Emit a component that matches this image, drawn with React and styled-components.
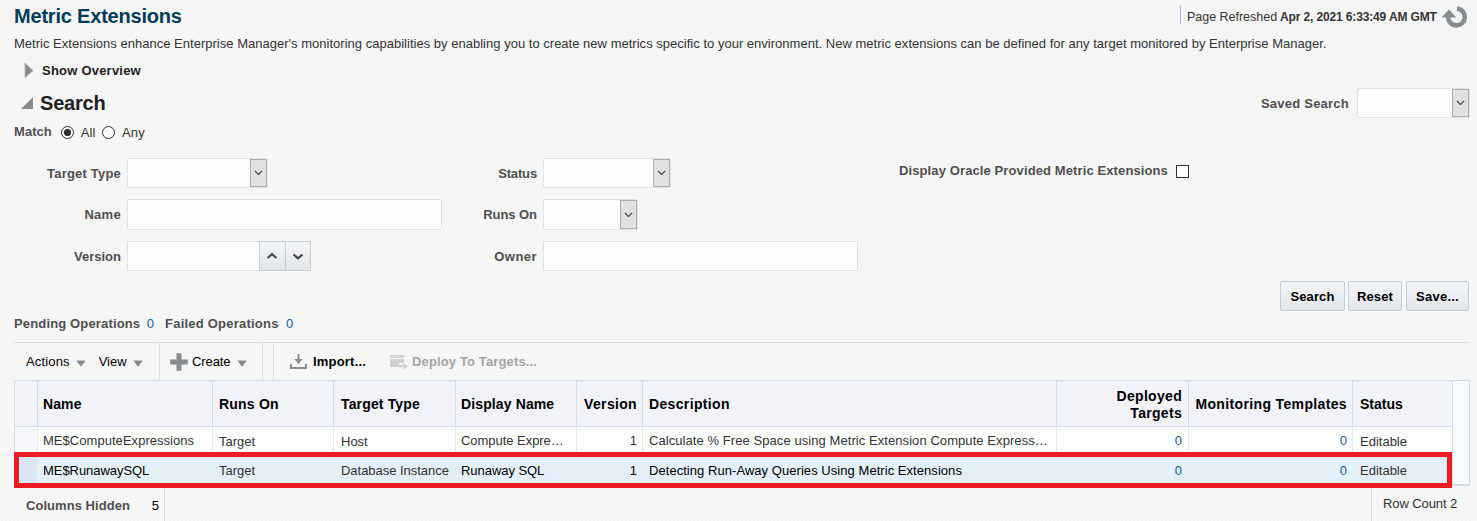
import React from 'react';
import styled, { createGlobalStyle } from 'styled-components';

const Global = createGlobalStyle`
  * { box-sizing: border-box; }
  body {
    margin: 0;
    font: 13px/15px "Liberation Sans", Arial, sans-serif;
    color: #333;
    background: repeating-linear-gradient(45deg, #f8f8f8 0 1.414px, #f4f4f4 1.414px 2.828px);
  }
`;

const Text = styled.span`
  display: block;
  white-space: nowrap;
  font-size: ${p => p.$size || 13}px;
  font-weight: ${p => (p.$bold ? 700 : 400)};
  color: ${p => p.$color || '#333'};
  letter-spacing: ${p => p.$ls || 0}px;
`;

const Page = styled.main`
  width: 1477px;
  height: 521px;
  overflow: hidden;
  padding-left: 14px;
`;

const Header = styled.header`
  display: flex;
  justify-content: space-between;
  height: 36px;
`;

const Title = styled.h1`
  margin: ${p => p.$top}px 0 0;
  font-size: 20px;
  line-height: 22px;
  font-weight: 700;
  white-space: nowrap;
  color: ${p => p.$color};
  letter-spacing: ${p => p.$ls}px;
`;

const Refreshed = styled.div`
  display: flex;
  width: 297px;
  height: 18px;
  margin-top: 6px;
  padding: 4px 0 0 6px;
  border-left: 1px solid #a9b8d2;
  gap: 3px;
  svg { margin: -4px 0 0 1px; flex: none; }
`;

const Overview = styled.div`
  display: flex;
  align-items: center;
  height: 17px;
  margin-top: 11px;
  padding-left: 10px;
  gap: 8px;
`;

const SearchHead = styled.div`
  display: flex;
  height: 34px;
  margin-top: 9px;
  padding-left: 7px;
  & > svg { margin: 9px 7px 0 0; }
`;

const SavedSearch = styled.div`
  display: flex;
  gap: 8px;
  margin-left: auto;
  padding-right: 7px;
  & > span { padding-top: 8px; }
`;

const Box = styled.div`
  display: flex;
  justify-content: flex-end;
  width: ${p => p.$w}px;
  height: ${p => p.$h || 30}px;
  border: 1px solid #dfe4e7;
  border-radius: 2px;
  background: #fcfdfe;
`;

const SelectArrow = styled.span`
  display: flex;
  align-items: center;
  justify-content: center;
  width: 17px;
  height: 100%;
  border: 1px solid #adadad;
  background: #e1e1e1;
`;

const SpinButton = styled.span`
  display: flex;
  align-items: center;
  justify-content: center;
  width: 26px;
  margin: -1px 0;
  border: 1px solid #c4ced7;
  border-right-width: ${p => (p.$last ? 1 : 0)}px;
  border-radius: ${p => (p.$last ? '0 2px 2px 0' : 0)};
  margin-right: ${p => (p.$last ? -1 : 0)}px;
  padding-right: ${p => (p.$last ? 0 : 1)}px;
  background: linear-gradient(#f3f5f6, #e3e7ea);
`;

const MatchRow = styled.div`
  display: flex;
  height: 36px;
  padding-top: 2px;
`;

const Radio = styled.span`
  width: 13px;
  height: 13px;
  margin: 2px 7px 0 ${p => p.$left}px;
  border: 1px solid #333;
  border-radius: 50%;
  background: ${p => (p.$on ? 'radial-gradient(circle, #333 0 3.3px, #fff 4px)' : '#fff')};
`;

const RadioText = styled(Text)`
  padding-top: 1px;
`;

const Form = styled.section`
  display: grid;
  grid-template-columns: 107px 331px 73px 350px auto;
  grid-template-rows: 30px 31px 30px;
  gap: 11px 6px;
`;

const Label = styled(Text)`
  padding-top: 8px;
  text-align: right;
`;

const CheckField = styled.label`
  display: flex;
  padding-top: 5px;
  gap: 8px;
`;

const Checkbox = styled.span`
  width: 13px;
  height: 13px;
  margin-top: 2px;
  border: 1px solid #333;
  background: #fff;
`;

const Actions = styled.div`
  display: flex;
  justify-content: flex-end;
  height: 35px;
  margin-top: 10px;
  padding-right: 8px;
`;

const Button = styled.button`
  width: ${p => p.$w}px;
  height: 30px;
  margin-left: ${p => p.$gap || 0}px;
  padding: 1px 0 0;
  border: 1px solid #c4ced7;
  border-radius: 2px;
  background: linear-gradient(#f3f5f6, #e3e7ea);
  font: 700 13px/15px "Liberation Sans", Arial, sans-serif;
  letter-spacing: ${p => p.$ls}px;
  color: #000;
`;

const Operations = styled.div`
  display: flex;
  height: 26px;
  & > :nth-child(2) { margin: 0 11px 0 6.6px; }
  & > :nth-child(4) { margin-left: 7.4px; }
`;

const Toolbar = styled.div`
  display: flex;
  width: 1456px;
  height: 38px;
  border-top: 1px solid #d6dfe6;
`;

const ToolGroup = styled.div`
  display: flex;
  width: ${p => p.$w}px;
  padding: 11px 0 0 ${p => p.$left}px;
  border-right: ${p => (p.$last ? '0' : '1px solid #d6dfe6')};
  svg { flex: none; }
`;

const Caret = styled.svg.attrs({ width: 10, height: 7, viewBox: '0 0 10 7' })`
  margin: 6px ${p => p.$right || 0}px 0 ${p => p.$left}px;
`;

const ToolIcon = styled.svg`
  margin: ${p => p.$m};
`;

const Table = styled.div`
  position: relative;
  display: grid;
  grid-template-columns: 23px 175px 121px 122px 121px 66px 414px 132px 164px 100px 18px;
  grid-template-rows: 47px 30px 29px;
  width: 1456px;
`;

const HeadCell = styled.div`
  display: flex;
  align-items: center;
  justify-content: ${p => (p.$end ? 'flex-end' : 'flex-start')};
  padding: ${p => `2px ${p.$end ? p.$pad : 0}px 0 ${p.$end ? 0 : p.$pad}px`};
  border: 1px solid #d2dce4;
  border-right: 0;
  background: #f2f3f8;
  font-size: 14px;
  font-weight: 700;
  line-height: 17px;
  letter-spacing: ${p => p.$ls}px;
  text-align: right;
  white-space: pre;
  color: #000;
`;

const Cell = styled.div`
  padding: ${p => `${p.$top}px ${p.$end ? p.$pad : 0}px 0 ${p.$end ? 0 : p.$pad}px`};
  border-left: 1px solid ${p => (p.$gutter ? '#d2dce4' : p.$selected ? '#e9edf2' : '#e8eaec')};
  background: ${p => (p.$selected ? (p.$gutter ? '#d9e7f5' : '#e3f0fa') : p.$gutter ? '#f7f8fc' : '#fff')};
  text-align: ${p => (p.$end ? 'right' : 'left')};
  letter-spacing: ${p => p.$ls || 0}px;
  white-space: nowrap;
  color: ${p => p.$color || '#333'};
`;

const ScrollGutter = styled.div`
  grid-column: 11;
  grid-row: 1 / 4;
  border: 1px solid #d2dce4;
  border-bottom-width: 2px;
  background: #f8f9fd;
`;

const Highlight = styled.div`
  position: absolute;
  left: 0;
  top: 72px;
  width: 1438px;
  height: 36px;
  border: 5px solid #ed1c24;
`;

const Footer = styled.footer`
  display: flex;
  justify-content: space-between;
  width: 1456px;
  height: 35px;
`;

const HiddenColumns = styled.div`
  display: flex;
  justify-content: space-between;
  width: 151px;
  padding: 12px 5px 0 12px;
  border-right: 1px solid #d2dce4;
`;

const RowCount = styled.div`
  width: 99px;
  padding: 10px 0 0 11px;
  border-left: 1px solid #d2dce4;
`;

const LABEL = '#4f4f4f';
const LINK = '#145c9e';
const ICON = '#878c8f';

const Select = ({ w, h }) => (
  <Box $w={w} $h={h}>
    <SelectArrow>
      <svg width="9" height="6" viewBox="0 0 9 6"><path d="M.8.8 4.5 4.5 8.2.8" fill="none" stroke="#444" strokeWidth="1.2" /></svg>
    </SelectArrow>
  </Box>
);

const DownCaret = props => <Caret {...props}><path d="M.3.5h9.4L5 6.8z" fill={ICON} /></Caret>;

const columns = [
  { label: 'Name', pad: 5, ls: 0.1 },
  { label: 'Runs On', pad: 6, ls: 0.2 },
  { label: 'Target Type', pad: 7, ls: 0.15 },
  { label: 'Display Name', pad: 5, ls: 0.12 },
  { label: 'Version', pad: 5, ls: 0.33, end: true },
  { label: 'Description', pad: 6, ls: 0.35 },
  { label: 'Deployed\nTargets', pad: 6, ls: 0.3, end: true },
  { label: 'Monitoring Templates', pad: 5, ls: 0.36, end: true },
  { label: 'Status', pad: 7, ls: 0 },
];

const rows = [
  {
    tops: [6, 7, 7, 6, 6, 6, 6, 6, 7],
    cells: ['ME$ComputeExpressions', 'Target', 'Host', 'Compute Expre…', '1', 'Calculate % Free Space using Metric Extension Compute Express…', '0', '0', 'Editable'],
    ls: [0.04, 0, 0, -0.04, 0, 0.07, 0, 0, 0],
  },
  {
    selected: true,
    tops: [6, 6, 6, 6, 6, 6, 6, 6, 6],
    cells: ['ME$RunawaySQL', 'Target', 'Database Instance', 'Runaway SQL', '1', 'Detecting Run-Away Queries Using Metric Extensions', '0', '0', 'Editable'],
    ls: [-0.05, 0, -0.03, -0.05, 0, 0.05, 0, 0, 0],
  },
];

const cellColor = (row, i) => {
  if (i === 6 || i === 7) return LINK;
  return row.selected && [0, 3, 4, 5].includes(i) ? '#000' : '#333';
};

export default function App() {
  return (
    <Page>
      <Global />
      <Header>
        <Title $top={5} $ls={-0.2} $color="#003d5b">Metric Extensions</Title>
        <Refreshed>
          <Text $size={12.5} $ls={-0.02}>Page Refreshed</Text>
          <Text $size={12} $bold $ls={-0.14}>Apr 2, 2021 6:33:49 AM GMT</Text>
          <svg width="27" height="24" viewBox="0 0 27 24">
            <path d="M16 2.6A8.4 8.4 0 1 1 7 11" fill="none" stroke={ICON} strokeWidth="4.6" />
            <path d="M.5 11.6 8 3.6l7.2 8z" fill={ICON} />
          </svg>
        </Refreshed>
      </Header>
      <Text $ls={0.016}>Metric Extensions enhance Enterprise Manager's monitoring capabilities by enabling you to create new metrics specific to your environment. New metric extensions can be defined for any target monitored by Enterprise Manager.</Text>
      <Overview>
        <svg width="10" height="17" viewBox="0 0 10 17"><path d="M1 1v15l8-7.5z" fill={ICON} stroke="#b4b8ba" strokeWidth=".8" /></svg>
        <Text $bold $color="#222" $ls={0.22}>Show Overview</Text>
      </Overview>
      <SearchHead>
        <svg width="12" height="12" viewBox="0 0 12 12"><path d="M0 12 12 0v12z" fill={ICON} /></svg>
        <Title as="h2" $top={4} $ls={-0.2} $color="#222">Search</Title>
        <SavedSearch>
          <Text $bold $color={LABEL} $ls={0.23}>Saved Search</Text>
          <Select w={113} />
        </SavedSearch>
      </SearchHead>
      <MatchRow>
        <Text $bold $color={LABEL} $ls={0.05}>Match</Text>
        <Radio $left={9} $on />
        <RadioText $ls={0.1}>All</RadioText>
        <Radio $left={6.5} />
        <RadioText $ls={0.1}>Any</RadioText>
      </MatchRow>
      <Form>
        <Label $bold $color={LABEL} $ls={0.2}>Target Type</Label>
        <Select w={141} />
        <Label $bold $color={LABEL} $ls={-0.15}>Status</Label>
        <Select w={128} />
        <CheckField>
          <Text $bold $color={LABEL} $ls={0.11}>Display Oracle Provided Metric Extensions</Text>
          <Checkbox />
        </CheckField>
        <Label $bold $color={LABEL} $ls={0.3}>Name</Label>
        <Box $w={315} $h={31} />
        <Label $bold $color={LABEL} $ls={-0.05}>Runs On</Label>
        <Select w={95} h={31} />
        <span />
        <Label $bold $color={LABEL}>Version</Label>
        <Box $w={184}>
          <SpinButton>
            <svg width="12" height="8" viewBox="0 0 12 8"><path d="M1.5 6 6 2.2 10.5 6" fill="none" stroke="#444" strokeWidth="2.2" /></svg>
          </SpinButton>
          <SpinButton $last>
            <svg width="12" height="8" viewBox="0 0 12 8"><path d="M1.5 2.5 6 6.3l4.5-3.8" fill="none" stroke="#444" strokeWidth="2.2" /></svg>
          </SpinButton>
        </Box>
        <Label $bold $color={LABEL} $ls={0.45}>Owner</Label>
        <Box $w={315} />
      </Form>
      <Actions>
        <Button $w={65} $ls={0.1}>Search</Button>
        <Button $w={54} $gap={3} $ls={0.1}>Reset</Button>
        <Button $w={63} $gap={4} $ls={0.25}>Save...</Button>
      </Actions>
      <Operations>
        <Text $bold $color={LABEL} $ls={0.15}>Pending Operations</Text>
        <Text $color={LINK}>0</Text>
        <Text $bold $color={LABEL} $ls={0.22}>Failed Operations</Text>
        <Text $color={LINK}>0</Text>
      </Operations>
      <Toolbar>
        <ToolGroup $w={146} $left={12}>
          <Text $color="#000" $ls={0.15}>Actions</Text>
          <DownCaret $left={6} $right={13} />
          <Text $color="#000">View</Text>
          <DownCaret $left={6} />
        </ToolGroup>
        <ToolGroup $w={103} $left={10}>
          <ToolIcon $m="-1px 4px 0 0" width="18" height="18" viewBox="0 0 18 18"><path d="M6.8.5h4.4v6.3H17.5v4.4h-6.3v6.3H6.8v-6.3H.5V6.8h6.3z" fill={ICON} stroke={ICON} strokeWidth=".6" strokeLinejoin="round" /></ToolIcon>
          <Text $color="#000" $ls={-0.1}>Create</Text>
          <DownCaret $left={7} />
        </ToolGroup>
        <ToolGroup $w={11} $left={0} />
        <ToolGroup $w={280} $left={15} $last>
          <ToolIcon $m="0 6px 0 1px" width="17" height="16" viewBox="0 0 17 16">
            <path d="M1 10v4h15v-4" fill="none" stroke={ICON} strokeWidth="2" />
            <path d="M7.5 0h2v5h3.2L8.5 10 4.3 5h3.2z" fill={ICON} />
          </ToolIcon>
          <Text $bold $color="#000" $ls={0.2}>Import...</Text>
          <ToolIcon $m="1px 4px 0 24px" width="18" height="15" viewBox="0 0 18 15">
            <path d="M0 0h14v3H0zM0 4h14v4H9v4H0z" fill="#cfd1d3" />
            <path d="M9 9.8h4.5V7.5L18 11.2l-4.5 3.6v-2.3H9z" fill="#cfd1d3" />
            <path d="M1.5 1.4h7" stroke="#f5f5f5" strokeWidth=".8" strokeDasharray="1 1" />
          </ToolIcon>
          <Text $bold $color="#a5a5a5" $ls={0.13}>Deploy To Targets...</Text>
        </ToolGroup>
      </Toolbar>
      <Table>
        <HeadCell />
        {columns.map(c => (
          <HeadCell key={c.label} $pad={c.pad} $ls={c.ls} $end={c.end}>{c.label}</HeadCell>
        ))}
        <ScrollGutter />
        {rows.map(row => (
          <React.Fragment key={row.cells[0]}>
            <Cell $gutter $selected={row.selected} $top={0} $pad={0} />
            {row.cells.map((text, i) => (
              <Cell key={i} $selected={row.selected} $top={row.tops[i]} $pad={columns[i].pad} $end={columns[i].end} $ls={row.ls[i]} $color={cellColor(row, i)}>{text}</Cell>
            ))}
          </React.Fragment>
        ))}
        <Highlight />
      </Table>
      <Footer>
        <HiddenColumns>
          <Text $bold $color={LABEL} $ls={0.05}>Columns Hidden</Text>
          <Text $color="#000">5</Text>
        </HiddenColumns>
        <RowCount><Text $ls={-0.1}>Row Count 2</Text></RowCount>
      </Footer>
    </Page>
  );
}
